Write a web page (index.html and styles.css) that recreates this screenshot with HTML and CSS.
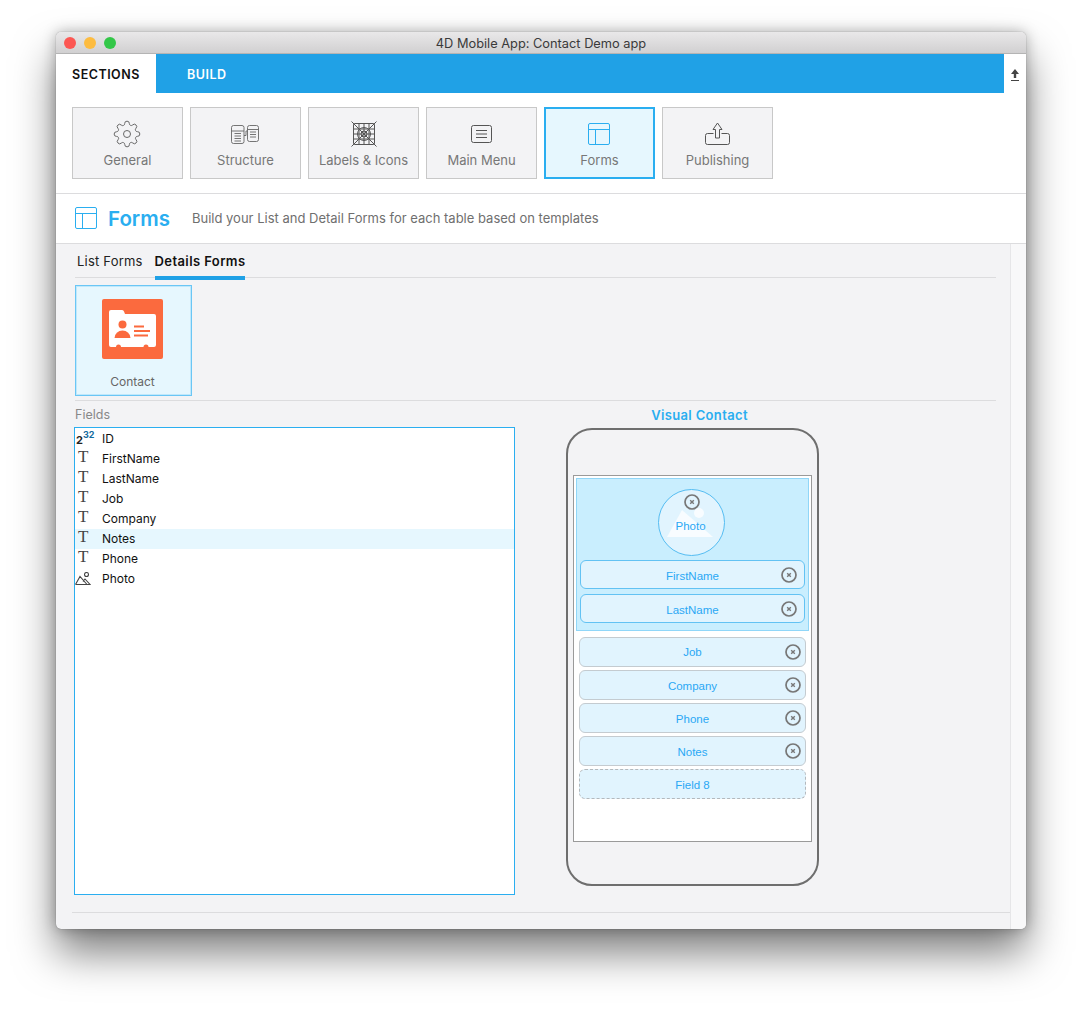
FILE: index.html
```html
<!DOCTYPE html>
<html lang="en">
<head>
  <meta charset="UTF-8" />
  <title>4D Mobile App: Contact Demo app</title>
  <link rel="stylesheet" href="styles.css">
</head>
<body>
  <div class="window">
    <div class="titlebar">
      <div class="lights">
        <span class="light light-red"></span>
        <span class="light light-yellow"></span>
        <span class="light light-green"></span>
      </div>
      <div class="title">4D Mobile App: Contact Demo app</div>
    </div>

    <div class="topbar">
      <div class="tabs">
        <div class="tab tab-active">SECTIONS</div>
        <div class="tab">BUILD</div>
      </div>
      <svg class="upload" width="12" height="14" viewBox="0 0 12 14"><path d="M6 1L10 6H7.2V10H4.8V6H2Z" fill="#444"/><path d="M2 12.5H10" stroke="#444" stroke-width="1"/></svg>
    </div>

    <div class="sections">
      <div class="section-btn">
        <svg class="icon-general" width="28" height="28" viewBox="0 0 24 24" fill="none" stroke="#666" stroke-width=".85"><circle cx="12" cy="12" r="3"/><path d="M19.4 15a1.65 1.65 0 0 0 .33 1.82l.06.06a2 2 0 0 1 0 2.83 2 2 0 0 1-2.83 0l-.06-.06a1.65 1.65 0 0 0-1.82-.33 1.65 1.65 0 0 0-1 1.51V21a2 2 0 0 1-2 2 2 2 0 0 1-2-2v-.09A1.65 1.65 0 0 0 9 19.4a1.65 1.65 0 0 0-1.82.33l-.06.06a2 2 0 0 1-2.83 0 2 2 0 0 1 0-2.83l.06-.06a1.65 1.65 0 0 0 .33-1.82 1.65 1.65 0 0 0-1.51-1H3a2 2 0 0 1-2-2 2 2 0 0 1 2-2h.09A1.65 1.65 0 0 0 4.6 9a1.65 1.65 0 0 0-.33-1.82l-.06-.06a2 2 0 0 1 0-2.83 2 2 0 0 1 2.83 0l.06.06a1.65 1.65 0 0 0 1.82.33H9a1.65 1.65 0 0 0 1-1.51V3a2 2 0 0 1 2-2 2 2 0 0 1 2 2v.09a1.65 1.65 0 0 0 1 1.51 1.65 1.65 0 0 0 1.82-.33l.06-.06a2 2 0 0 1 2.83 0 2 2 0 0 1 0 2.83l-.06.06a1.65 1.65 0 0 0-.33 1.82V9a1.65 1.65 0 0 0 1.51 1H21a2 2 0 0 1 2 2 2 2 0 0 1-2 2h-.09a1.65 1.65 0 0 0-1.51 1z"/></svg>
        <span>General</span>
      </div>
      <div class="section-btn">
        <svg class="icon-structure" width="28" height="19" viewBox="0 0 28 19" fill="none" stroke="#666" stroke-width=".9"><rect x=".5" y=".5" width="12.500" height="18" rx="2"/><path d="M.5 6h12.500M3.500 8.500h6.500M3.500 11h6.500M3.500 13.500h6.500M3.500 16h6.500"/><rect x="16.500" y=".5" width="11" height="16" rx="2"/><path d="M16.500 4.500h11M19 7h6M19 9.500h6M19 12h6M13 10.500h2V6h1.500"/></svg>
        <span>Structure</span>
      </div>
      <div class="section-btn">
        <svg width="26" height="26" viewBox="0 0 26 26" fill="none" stroke="#555" stroke-width="1"><rect x="2.500" y="2.500" width="21" height="21" rx="1"/><circle cx="13" cy="13" r="6.500"/><circle cx="13" cy="13" r="3"/><path d="M.5.500l25 25M25.500.500l-25 25M2.500 8h21M2.500 13h21M2.500 18h21M8 2.500v21M13 2.500v21M18 2.500v21"/></svg>
        <span>Labels &amp; Icons</span>
      </div>
      <div class="section-btn">
        <svg width="23" height="20" viewBox="0 0 23 20" fill="none" stroke="#555" stroke-width="1"><rect x="1.500" y="1.500" width="20" height="17" rx="2"/><path d="M6 6.500h11M6 10h11M6 13.500h11"/></svg>
        <span>Main Menu</span>
      </div>
      <div class="section-btn section-btn-active">
        <svg width="23" height="23" viewBox="0 0 23 23" fill="none" stroke="#2aaef0" stroke-width="1"><rect x=".5" y=".5" width="21" height="21" rx="1.500"/><path d="M.5 6.500h21M7.500 6.500v15"/></svg>
        <span>Forms</span>
      </div>
      <div class="section-btn">
        <svg width="25" height="24" viewBox="0 0 25 24" fill="none" stroke="#555" stroke-width="1"><path d="M8.500 11.500H2.500a2 2 0 0 0-2 2v7a2 2 0 0 0 2 2h20a2 2 0 0 0 2-2v-7a2 2 0 0 0-2-2h-6"/><path d="M12.500 1L8 7.500h2.500V16h4V7.500H17Z"/></svg>
        <span>Publishing</span>
      </div>
    </div>

    <div class="page-head">
      <svg width="23" height="23" viewBox="0 0 23 23" fill="none" stroke="#2aaef0" stroke-width="1"><rect x=".5" y=".5" width="21" height="21" rx="1.500"/><path d="M.5 6.500h21M7.500 6.500v15"/></svg>
      <h1>Forms</h1>
      <p>Build your List and Detail Forms for each table based on templates</p>
    </div>

    <div class="content">
      <div class="main">
        <div class="subtabs">
          <div class="subtab">List Forms</div>
          <div class="subtab subtab-active">Details Forms</div>
        </div>

        <div class="tables">
          <div class="table-tile">
            <svg width="61" height="60" viewBox="0 0 61 60">
              <rect width="61" height="60" rx="2" fill="#fb6a3e"/>
              <path d="M7 13a2 2 0 0 1 2-2h11a2 2 0 0 1 2 1.500l1 2.500h29a2 2 0 0 1 2 2v29a2 2 0 0 1-2 2H46.500a2.500 2.500 0 0 0-5 0H19a2.500 2.500 0 0 0-5 0H9a2 2 0 0 1-2-2Z" fill="#fff"/>
              <circle cx="20.500" cy="25.500" r="4" fill="#fb6a3e"/>
              <path d="M12.500 39a8 7.500 0 0 1 16 0Z" fill="#fb6a3e"/>
              <path d="M32 27.500h10M32 32h16M32 36.500h14" stroke="#fb6a3e" stroke-width="1.800"/>
            </svg>
            <span>Contact</span>
          </div>
        </div>

        <div class="editor">
          <div class="fields">
            <div class="fields-label">Fields</div>
            <div class="field-list">
              <div class="field-row"><span class="type-num">2<sup>32</sup></span>ID</div>
              <div class="field-row"><span class="type-text">T</span>FirstName</div>
              <div class="field-row"><span class="type-text">T</span>LastName</div>
              <div class="field-row"><span class="type-text">T</span>Job</div>
              <div class="field-row"><span class="type-text">T</span>Company</div>
              <div class="field-row field-row-selected"><span class="type-text">T</span>Notes</div>
              <div class="field-row"><span class="type-text">T</span>Phone</div>
              <div class="field-row">
                <span class="type-pic"><svg width="16" height="13" viewBox="0 0 16 13" fill="none" stroke="#444" stroke-width="1.100"><path d="M.5 12.500L5 4.500l7 8M.5 12.500H15L10 7 8 9.500"/><circle cx="11.500" cy="2.500" r="2"/></svg></span>Photo
              </div>
            </div>
          </div>

          <div class="preview">
            <div class="preview-title">Visual Contact</div>
            <div class="phone">
              <div class="screen">
                <div class="header-zone">
                  <div class="photo">
                    <svg class="photo-art" width="47" height="29" viewBox="0 0 47 29"><path d="M0 29L15 2 46 29Z" fill="#fff" fill-opacity=".75"/><circle cx="32" cy="5" r="5" fill="#fff" fill-opacity=".75"/></svg>
                    <svg class="close close-photo" width="16" height="16" viewBox="0 0 16 16"><use href="#close"/></svg>
                    <span>Photo</span>
                  </div>
                  <div class="slot slot-header">FirstName<svg class="close" width="16" height="16" viewBox="0 0 16 16"><use href="#close"/></svg></div>
                  <div class="slot slot-header">LastName<svg class="close" width="16" height="16" viewBox="0 0 16 16"><use href="#close"/></svg></div>
                </div>
                <div class="body-zone">
                  <div class="slot">Job<svg class="close" width="16" height="16" viewBox="0 0 16 16"><use href="#close"/></svg></div>
                  <div class="slot">Company<svg class="close" width="16" height="16" viewBox="0 0 16 16"><use href="#close"/></svg></div>
                  <div class="slot">Phone<svg class="close" width="16" height="16" viewBox="0 0 16 16"><use href="#close"/></svg></div>
                  <div class="slot">Notes<svg class="close" width="16" height="16" viewBox="0 0 16 16"><use href="#close"/></svg></div>
                  <div class="slot slot-empty">Field 8</div>
                </div>
              </div>
            </div>
          </div>
        </div>

        <div class="main-foot"></div>
      </div>
      <div class="scrollbar"></div>
    </div>
  </div>

  <svg width="0" height="0" class="defs">
    <symbol id="close" viewBox="0 0 16 16">
      <circle cx="8" cy="8" r="7" fill="none" stroke="#777" stroke-width="1.700"/>
      <path d="M6.200 6.200l3.600 3.600M9.800 6.200l-3.600 3.600" stroke="#777" stroke-width="1.400"/>
    </symbol>
  </svg>
</body>
</html>
```

FILE: styles.css
```css
:root {
  --azul: #20a1e6;
  --azul-claro: #2aaef0;
  --fundo: #f3f3f5;
  --linha: #dcdcde;
  --font-family: 'Inter', 'Liberation Sans', sans-serif;
}

html, body {
  margin: 0;
  height: 100%;
  overflow: hidden;
  background-color: #fff;
}

body {
  padding: 32px 56px 0;
  box-sizing: border-box;
  font-family: var(--font-family);
  color: #111;
}

.defs {
  position: absolute;
}

.window {
  width: 970px;
  height: 897px;
  display: flex;
  flex-direction: column;
  border-radius: 5px;
  background-color: var(--fundo);
  box-shadow: 0 24px 42px rgba(0, 0, 0, 0.5), 0 0 14px rgba(0, 0, 0, 0.28), 0 0 1px rgba(0, 0, 0, 0.5);
}

/* title bar */
.titlebar {
  height: 22px;
  flex-shrink: 0;
  box-sizing: border-box;
  display: flex;
  align-items: center;
  background: linear-gradient(#e9e8e9, #d1d0d1);
  border-bottom: 1px solid #b4b4b4;
  border-radius: 5px 5px 0 0;
  position: relative;
}

.lights {
  display: flex;
  gap: 8px;
  padding-left: 8px;
}

.light {
  width: 12px;
  height: 12px;
  border-radius: 50%;
}

.light-red { background-color: #fc5753; }
.light-yellow { background-color: #fdbc40; }
.light-green { background-color: #33c748; }

.title {
  position: absolute;
  left: 0;
  right: 0;
  padding-top: 2px;
  text-align: center;
  font-size: 12.800px;
  color: #3a3a3a;
}

/* top bar */
.topbar {
  height: 39px;
  flex-shrink: 0;
  display: flex;
  background-color: #fff;
}

.tabs {
  width: 948px;
  display: flex;
  background-color: var(--azul);
}

.tab {
  width: 100px;
  padding-left: 31px;
  box-sizing: border-box;
  line-height: 41px;
  font-size: 12.500px;
  font-weight: 600;
  letter-spacing: 0.5px;
  color: #fff;
}

.tab-active {
  padding-left: 16px;
  background-color: #fff;
  color: #111;
}

.upload {
  margin: 14px 0 0 5px;
}

/* section buttons */
.sections {
  height: 101px;
  flex-shrink: 0;
  box-sizing: border-box;
  padding: 14px 16px;
  display: flex;
  gap: 7px;
  background-color: #fff;
  border-bottom: 1px solid var(--linha);
}

.section-btn {
  width: 111px;
  height: 72px;
  box-sizing: border-box;
  position: relative;
  display: flex;
  justify-content: center;
  align-items: center;
  padding-bottom: 18px;
  background-color: var(--fundo);
  border: 1px solid #c8c8c8;
  font-size: 13px;
  color: #777;
}

.section-btn span {
  position: absolute;
  left: 0;
  right: 0;
  top: 44px;
  text-align: center;
}

.section-btn-active {
  background-color: #e6f7fe;
  border: 2px solid var(--azul-claro);
}

.section-btn-active span {
  top: 43px;
}

.icon-general {
  margin-left: -2px;
}

.icon-structure {
  margin-left: -2px;
}

/* page header */
.page-head {
  height: 50px;
  flex-shrink: 0;
  box-sizing: border-box;
  padding-left: 19px;
  display: flex;
  align-items: center;
  background-color: #fff;
  border-bottom: 1px solid var(--linha);
}

.page-head h1 {
  margin: 0 0 0 10px;
  font-size: 20.500px;
  font-weight: 600;
  color: var(--azul-claro);
}

.page-head p {
  margin: 0 0 2px 22px;
  font-size: 13px;
  color: #6f6f6f;
}

/* content */
.content {
  flex: 1;
  display: flex;
  min-height: 0;
}

.main {
  flex: 1;
  padding: 0 14px 0 19px;
}

.scrollbar {
  width: 15px;
  background-color: #f8f8f9;
  border-left: 1px solid #e6e6e8;
  border-radius: 0 0 5px 0;
}

.subtabs {
  height: 33px;
  display: flex;
  gap: 12px;
  padding-left: 2px;
  border-bottom: 1px solid var(--linha);
}

.subtab {
  padding-top: 9px;
  font-size: 13px;
  letter-spacing: 0.2px;
  color: #222;
}

.subtab-active {
  height: 36px;
  box-sizing: border-box;
  font-weight: 600;
  letter-spacing: 0.4px;
  color: #111;
  border-bottom: 4px solid var(--azul);
}

.tables {
  padding: 7px 0 4px;
  border-bottom: 1px solid var(--linha);
}

.table-tile {
  width: 117px;
  height: 111px;
  box-sizing: border-box;
  display: flex;
  flex-direction: column;
  align-items: center;
  padding: 13px 2px 0 0;
  background-color: #e6f7fe;
  border: 1px solid #6ac6f5;
  box-shadow: inset 0 0 0 1px rgba(106, 198, 245, 0.3);
  font-size: 12px;
  color: #666;
}

.table-tile span {
  margin-top: 15px;
}

/* fields and phone */
.editor {
  display: flex;
  gap: 51px;
  padding-top: 6px;
}

.fields {
  margin-left: -1px;
  width: 441px;
}

.fields-label {
  height: 20px;
  line-height: 15px;
  padding-left: 1px;
  font-size: 12.500px;
  color: #888;
}

.field-list {
  height: 468px;
  box-sizing: border-box;
  padding-top: 1px;
  background-color: #fff;
  border: 1px solid var(--azul-claro);
}

.field-row {
  height: 20px;
  box-sizing: border-box;
  padding-bottom: 2px;
  display: flex;
  align-items: center;
  font-size: 12px;
  color: #111;
}

.field-row-selected {
  background-color: #e6f7fe;
}

.field-row > span {
  width: 27px;
  flex-shrink: 0;
  text-align: left;
}

.type-text {
  padding-left: 3px;
  box-sizing: border-box;
  margin-top: -3px;
  font-family: 'Liberation Serif', serif;
  font-size: 17px;
  color: #444;
}

.type-num {
  padding: 4px 0 0 1px;
  box-sizing: border-box;
  font-size: 11px;
  font-weight: 700;
  color: #222;
}

.type-num sup {
  font-size: 9px;
  color: #136a9e;
  line-height: 0;
  vertical-align: 6px;
}

.type-pic svg {
  display: block;
}

.preview {
  width: 267px;
}

.preview-title {
  height: 21px;
  line-height: 17px;
  text-align: center;
  font-size: 13px;
  font-weight: 600;
  letter-spacing: 0.35px;
  color: var(--azul-claro);
}

.phone {
  width: 253px;
  height: 458px;
  box-sizing: border-box;
  padding: 45px 5px 0;
  border: 2px solid #6e6e6e;
  border-radius: 26px;
}

.screen {
  width: 239px;
  height: 367px;
  box-sizing: border-box;
  padding: 2px;
  background-color: #fff;
  border: 1px solid #9a9a9a;
}

.header-zone {
  height: 153px;
  box-sizing: border-box;
  display: flex;
  flex-direction: column;
  align-items: center;
  gap: 4px;
  padding: 10px 4px 0;
  background-color: #c9eefe;
  border: 1px solid #90d6f8;
}

.photo {
  width: 67px;
  height: 67px;
  flex-shrink: 0;
  box-sizing: border-box;
  position: relative;
  margin-right: 2px;
  background-color: #e1f4fe;
  border: 1px solid #55bdf2;
  border-radius: 50%;
  font-family: 'Liberation Sans', sans-serif;
  font-size: 11.500px;
  color: #2aa8f5;
}

.photo span {
  position: absolute;
  left: 0;
  right: 2px;
  top: 30px;
  text-align: center;
}

.photo-art {
  position: absolute;
  left: 8px;
  top: 18px;
}

.close {
  position: absolute;
  right: 4px;
  top: 50%;
  margin-top: -8px;
}

.close-photo {
  right: auto;
  left: 25px;
  top: 4px;
  margin-top: 0;
}

.slot {
  width: 227px;
  height: 30px;
  box-sizing: border-box;
  padding-top: 1px;
  position: relative;
  flex-shrink: 0;
  display: flex;
  align-items: center;
  justify-content: center;
  background-color: #e1f4fe;
  border: 1px solid #c4cbd0;
  border-radius: 6px;
  font-family: 'Liberation Sans', sans-serif;
  font-size: 11.500px;
  color: #2aa8f5;
}

.slot-header {
  width: 225px;
  height: 29px;
  padding-top: 2px;
  border-color: #62c2f3;
}

.slot-header:last-child {
  margin-top: 1px;
}

.slot-header .close {
  right: 7px;
}

.body-zone {
  display: flex;
  flex-direction: column;
  gap: 3px;
  padding: 6px 3px 0 3px;
}

.body-zone .slot:first-child {
  padding-top: 0;
}

.slot-empty {
  border: 1px dashed #b4b8bc;
}

.main-foot {
  margin: 17px -14px 0 -3px;
  border-top: 1px solid var(--linha);
}
```
